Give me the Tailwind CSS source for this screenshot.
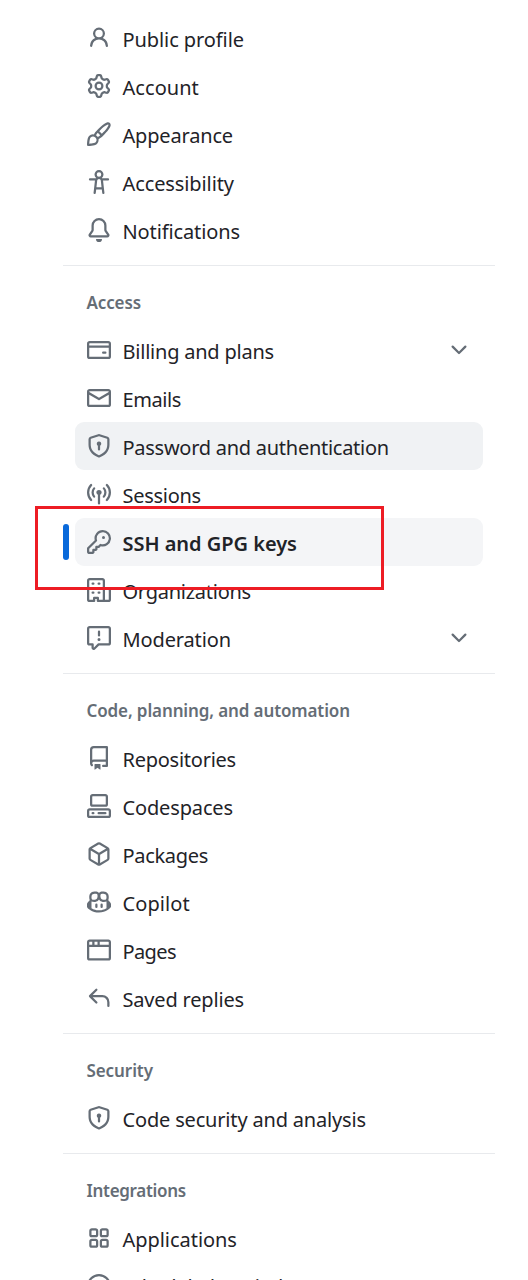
<!DOCTYPE html>
<html lang="en">
<head>
<meta charset="utf-8">
<title>Settings</title>
<script src="https://cdn.jsdelivr.net/npm/@tailwindcss/browser@4"></script>
</head>
<body class="relative h-[1280px] overflow-hidden bg-white font-['Noto_Sans','Open_Sans',sans-serif] text-[#1f2328]">
<nav id="nav" class="ml-[63px] w-[432px] pt-[14px]"></nav>
<div class="pointer-events-none absolute left-[35px] top-[506px] h-[84px] w-[349px] border-3 border-[#ed1c24]"></div>
<script>
const icons = {
person: "M10.561 8.073a6.005 6.005 0 0 1 3.432 5.142.75.75 0 1 1-1.498.07 4.5 4.5 0 0 0-8.99 0 .75.75 0 0 1-1.498-.07 6.004 6.004 0 0 1 3.431-5.142 3.999 3.999 0 1 1 5.123 0ZM10.5 5a2.5 2.5 0 1 0-5 0 2.5 2.5 0 0 0 5 0Z",
gear: "M8 0a8.2 8.2 0 0 1 .701.031C9.444.095 9.99.645 10.16 1.29l.288 1.107c.018.066.079.158.212.224.231.114.454.243.668.386.123.082.233.09.299.071l1.103-.303c.644-.176 1.392.021 1.82.63.27.385.506.792.704 1.218.315.675.111 1.422-.364 1.891l-.814.806c-.049.048-.098.147-.088.294.016.257.016.515 0 .772-.01.147.038.246.088.294l.814.806c.475.469.679 1.216.364 1.891a7.977 7.977 0 0 1-.704 1.217c-.428.61-1.176.807-1.82.63l-1.102-.302c-.067-.019-.177-.011-.3.071a5.909 5.909 0 0 1-.668.386c-.133.066-.194.158-.211.224l-.29 1.106c-.168.646-.715 1.196-1.458 1.26a8.006 8.006 0 0 1-1.402 0c-.743-.064-1.289-.614-1.458-1.26l-.289-1.106c-.018-.066-.079-.158-.212-.224a5.738 5.738 0 0 1-.668-.386c-.123-.082-.233-.09-.299-.071l-1.103.303c-.644.176-1.392-.021-1.82-.63a8.12 8.12 0 0 1-.704-1.218c-.315-.675-.111-1.422.363-1.891l.815-.806c.05-.048.098-.147.088-.294a6.214 6.214 0 0 1 0-.772c.01-.147-.038-.246-.088-.294l-.815-.806C.635 6.045.431 5.298.746 4.623a7.92 7.92 0 0 1 .704-1.217c.428-.61 1.176-.807 1.82-.63l1.102.302c.067.019.177.011.3-.071.214-.143.437-.272.668-.386.133-.066.194-.158.211-.224l.29-1.106C6.009.645 6.556.095 7.299.03 7.53.01 7.764 0 8 0Zm-.571 1.525c-.036.003-.108.036-.137.146l-.289 1.105c-.147.561-.549.967-.998 1.189-.173.086-.34.183-.5.29-.417.278-.97.423-1.529.27l-1.103-.303c-.109-.03-.175.016-.195.045-.22.312-.412.644-.573.99-.014.031-.021.11.059.19l.815.806c.411.406.562.957.53 1.456a4.709 4.709 0 0 0 0 .582c.032.499-.119 1.05-.53 1.456l-.815.806c-.081.08-.073.159-.059.19.162.346.353.677.573.989.02.03.085.076.195.046l1.102-.303c.56-.153 1.113-.008 1.53.27.161.107.328.204.501.29.447.222.85.629.997 1.189l.289 1.105c.029.109.101.143.137.146a6.6 6.6 0 0 0 1.142 0c.036-.003.108-.036.137-.146l.289-1.105c.147-.561.549-.967.998-1.189.173-.086.34-.183.5-.29.417-.278.97-.423 1.529-.27l1.103.303c.109.029.175-.016.195-.045.22-.313.411-.644.573-.99.014-.031.021-.11-.059-.19l-.815-.806c-.411-.406-.562-.957-.53-1.456a4.709 4.709 0 0 0 0-.582c-.032-.499.119-1.05.53-1.456l.815-.806c.081-.08.073-.159.059-.19a6.464 6.464 0 0 0-.573-.989c-.02-.03-.085-.076-.195-.046l-1.102.303c-.56.153-1.113.008-1.53-.27a4.44 4.44 0 0 0-.501-.29c-.447-.222-.85-.629-.997-1.189l-.289-1.105c-.029-.11-.101-.143-.137-.146a6.6 6.6 0 0 0-1.142 0ZM11 8a3 3 0 1 1-6 0 3 3 0 0 1 6 0ZM9.5 8a1.5 1.5 0 1 0-3.001.001A1.5 1.5 0 0 0 9.5 8Z",
brush: "M11.134 1.535c.7-.509 1.416-.942 2.076-1.155.649-.21 1.463-.267 2.069.34.603.601.568 1.411.368 2.07-.202.668-.624 1.39-1.125 2.096-1.011 1.424-2.496 2.987-3.775 4.249-1.098 1.084-2.132 1.839-3.04 2.3a3.744 3.744 0 0 1-1.055 3.217c-.431.431-1.065.691-1.657.861-.614.177-1.294.287-1.914.357A21.151 21.151 0 0 1 .797 16H.743l.007-.75H.749L.742 16a.75.75 0 0 1-.743-.742l.743-.008-.742.007v-.054a21.25 21.25 0 0 1 .13-2.284c.067-.647.187-1.287.358-1.914.17-.591.43-1.226.86-1.657a3.746 3.746 0 0 1 3.227-1.054c.466-.893 1.225-1.907 2.314-2.982 1.271-1.255 2.833-2.75 4.245-3.777ZM1.62 13.089c-.051.464-.086.929-.104 1.395.466-.018.932-.053 1.396-.104a10.511 10.511 0 0 0 1.668-.309c.526-.151.856-.325 1.011-.48a2.25 2.25 0 1 0-3.182-3.182c-.155.155-.329.485-.48 1.01a10.515 10.515 0 0 0-.309 1.67Zm10.396-10.34c-1.224.89-2.605 2.189-3.822 3.384l1.718 1.718c1.21-1.205 2.51-2.597 3.387-3.833.47-.662.78-1.227.912-1.662.134-.444.032-.551.009-.575h-.001V1.78c-.014-.014-.113-.113-.548.027-.432.14-.995.462-1.655.942Zm-4.832 7.266-.001.001a9.859 9.859 0 0 0 1.63-1.142L7.155 7.216a9.7 9.7 0 0 0-1.161 1.607c.482.302.889.71 1.19 1.192Z",
accessibility: "M9.923 5.302c.063.063.122.129.178.198H14A.75.75 0 0 1 14 7h-3.3l.578 5.163.362 2.997a.75.75 0 0 1-1.49.18L9.868 13H6.132l-.282 2.34a.75.75 0 0 1-1.49-.18l.362-2.997L5.3 7H2a.75.75 0 0 1 0-1.5h3.9a2.54 2.54 0 0 1 .176-.198 3 3 0 1 1 3.847 0ZM9.2 7.073h-.001a1.206 1.206 0 0 0-2.398 0L6.305 11.5h3.39ZM9.5 3a1.5 1.5 0 1 0-3.001.001A1.5 1.5 0 0 0 9.5 3Z",
bell: "M8 16a2 2 0 0 0 1.985-1.75c.017-.137-.097-.25-.235-.25h-3.5c-.138 0-.252.113-.235.25A2 2 0 0 0 8 16ZM3 5a5 5 0 0 1 10 0v2.947c0 .05.015.098.042.139l1.703 2.555A1.519 1.519 0 0 1 13.482 13H2.518a1.516 1.516 0 0 1-1.263-2.36l1.703-2.554A.255.255 0 0 0 3 7.947Zm5-3.5A3.5 3.5 0 0 0 4.5 5v2.947c0 .346-.102.683-.294.97l-1.703 2.556a.017.017 0 0 0-.003.01l.001.006c0 .002.002.004.004.006l.006.004.007.001h10.964l.007-.001.006-.004.004-.006.001-.007a.017.017 0 0 0-.003-.01l-1.703-2.554a1.745 1.745 0 0 1-.294-.97V5A3.5 3.5 0 0 0 8 1.5Z",
card: "M10.75 9a.75.75 0 0 0 0 1.5h1.5a.75.75 0 0 0 0-1.5h-1.5ZM0 3.75C0 2.784.784 2 1.75 2h12.5c.966 0 1.75.784 1.75 1.75v8.5A1.75 1.75 0 0 1 14.25 14H1.75A1.75 1.75 0 0 1 0 12.25ZM14.5 6.5h-13v5.75c0 .138.112.25.25.25h12.5a.25.25 0 0 0 .25-.25Zm0-2.75a.25.25 0 0 0-.25-.25H1.75a.25.25 0 0 0-.25.25V5h13Z",
mail: "M1.75 2h12.5c.966 0 1.75.784 1.75 1.75v8.5A1.75 1.75 0 0 1 14.25 14H1.75A1.75 1.75 0 0 1 0 12.25v-8.5C0 2.784.784 2 1.75 2ZM1.5 12.251c0 .138.112.25.25.25h12.5a.25.25 0 0 0 .25-.25V5.809L8.38 9.397a.75.75 0 0 1-.76 0L1.5 5.809v6.442Zm13-8.181v-.32a.25.25 0 0 0-.25-.25H1.75a.25.25 0 0 0-.25.25v.32L8 7.88Z",
shield: "m8.533.133 5.25 1.68A1.75 1.75 0 0 1 15 3.48V7c0 1.566-.32 3.182-1.303 4.682-.983 1.498-2.585 2.813-5.032 3.855a1.697 1.697 0 0 1-1.33 0c-2.447-1.042-4.049-2.357-5.032-3.855C1.32 10.182 1 8.566 1 7V3.48a1.75 1.75 0 0 1 1.217-1.667l5.25-1.68a1.748 1.748 0 0 1 1.066 0Zm-.61 1.429.001.001-5.25 1.68a.251.251 0 0 0-.174.237V7c0 1.36.275 2.666 1.057 3.859.784 1.194 2.121 2.342 4.366 3.298a.196.196 0 0 0 .154 0c2.245-.957 3.582-2.103 4.366-3.297C13.225 9.666 13.5 8.358 13.5 7V3.48a.25.25 0 0 0-.174-.238l-5.25-1.68a.25.25 0 0 0-.153 0ZM9.5 6.5c0 .536-.286 1.032-.75 1.3v2.45a.75.75 0 0 1-1.5 0V7.8A1.5 1.5 0 1 1 9.5 6.5Z",
broadcast: "M8.75 8.582v5.668a.75.75 0 0 1-1.5 0V8.582a1.75 1.75 0 1 1 1.5 0Zm3.983-7.125a.75.75 0 0 1 1.06.026A7.976 7.976 0 0 1 16 7c0 2.139-.84 4.083-2.207 5.517a.75.75 0 1 1-1.086-1.034A6.474 6.474 0 0 0 14.5 7a6.474 6.474 0 0 0-1.793-4.483.75.75 0 0 1 .026-1.06Zm-9.466 0c.3.286.312.76.026 1.06A6.474 6.474 0 0 0 1.5 7a6.47 6.47 0 0 0 1.793 4.483.75.75 0 0 1-1.086 1.034A7.973 7.973 0 0 1 0 7c0-2.139.84-4.083 2.207-5.517a.75.75 0 0 1 1.06-.026Zm8.556 2.321A4.988 4.988 0 0 1 13 7a4.988 4.988 0 0 1-1.177 3.222.75.75 0 1 1-1.146-.967A3.487 3.487 0 0 0 11.5 7c0-.86-.309-1.645-.823-2.255a.75.75 0 0 1 1.146-.967Zm-6.492.958A3.48 3.48 0 0 0 4.5 7a3.48 3.48 0 0 0 .823 2.255.75.75 0 0 1-1.146.967A4.981 4.981 0 0 1 3 7a4.982 4.982 0 0 1 1.188-3.236.75.75 0 1 1 1.143.972Z",
key: "M10.5 0a5.499 5.499 0 1 1-1.288 10.848l-.932.932a.749.749 0 0 1-.53.22H7v.75a.749.749 0 0 1-.22.53l-.5.5a.749.749 0 0 1-.53.22H5v.75a.749.749 0 0 1-.22.53l-.5.5a.749.749 0 0 1-.53.22h-2A1.75 1.75 0 0 1 0 14.25v-2c0-.199.079-.389.22-.53l4.932-4.932A5.5 5.5 0 0 1 10.5 0Zm-4 5.5c-.001.431.069.86.205 1.269a.75.75 0 0 1-.181.768L1.5 12.56v1.69c0 .138.112.25.25.25h1.69l.06-.06v-1.19a.75.75 0 0 1 .75-.75h1.19l.06-.06v-1.19a.75.75 0 0 1 .75-.75h1.19l1.023-1.025a.75.75 0 0 1 .768-.18A4 4 0 1 0 6.5 5.5ZM11 6a1 1 0 1 1 0-2 1 1 0 0 1 0 2Z",
org: "M1.75 16A1.75 1.75 0 0 1 0 14.25V1.75C0 .784.784 0 1.75 0h8.5C11.216 0 12 .784 12 1.75v12.5c0 .085-.006.168-.018.25h2.268a.25.25 0 0 0 .25-.25V8.285a.25.25 0 0 0-.111-.208l-1.055-.703a.749.749 0 1 1 .832-1.248l1.055.703c.487.325.779.871.779 1.456v5.965A1.75 1.75 0 0 1 14.25 16h-3.5a.766.766 0 0 1-.197-.026c-.099.017-.2.026-.303.026h-3a.75.75 0 0 1-.75-.75V14h-1v1.25a.75.75 0 0 1-.75.75Zm-.25-1.75c0 .138.112.25.25.25H4v-1.25a.75.75 0 0 1 .75-.75h2.5a.75.75 0 0 1 .75.75v1.25h2.25a.25.25 0 0 0 .25-.25V1.75a.25.25 0 0 0-.25-.25h-8.5a.25.25 0 0 0-.25.25ZM3.75 6h.5a.75.75 0 0 1 0 1.5h-.5a.75.75 0 0 1 0-1.5ZM3 3.75A.75.75 0 0 1 3.75 3h.5a.75.75 0 0 1 0 1.5h-.5A.75.75 0 0 1 3 3.75Zm4 3A.75.75 0 0 1 7.75 6h.5a.75.75 0 0 1 0 1.5h-.5A.75.75 0 0 1 7 6.75ZM7.75 3h.5a.75.75 0 0 1 0 1.5h-.5a.75.75 0 0 1 0-1.5ZM3 9.75A.75.75 0 0 1 3.75 9h.5a.75.75 0 0 1 0 1.5h-.5A.75.75 0 0 1 3 9.75ZM7.75 9h.5a.75.75 0 0 1 0 1.5h-.5a.75.75 0 0 1 0-1.5Z",
report: "M0 1.75C0 .784.784 0 1.75 0h12.5C15.216 0 16 .784 16 1.75v9.5A1.75 1.75 0 0 1 14.25 13H8.06l-2.573 2.573A1.458 1.458 0 0 1 3 14.543V13H1.75A1.75 1.75 0 0 1 0 11.25Zm1.75-.25a.25.25 0 0 0-.25.25v9.5c0 .138.112.25.25.25h2a.75.75 0 0 1 .75.75v2.19l2.72-2.72a.749.749 0 0 1 .53-.22h6.5a.25.25 0 0 0 .25-.25v-9.5a.25.25 0 0 0-.25-.25Zm7 2.25v2.5a.75.75 0 0 1-1.5 0v-2.5a.75.75 0 0 1 1.5 0ZM9 9a1 1 0 1 1-2 0 1 1 0 0 1 2 0Z",
repo: "M2 2.5A2.5 2.5 0 0 1 4.5 0h8.75a.75.75 0 0 1 .75.75v12.5a.75.75 0 0 1-.75.75h-2.5a.75.75 0 0 1 0-1.5h1.75v-2h-8a1 1 0 0 0-.714 1.7.75.75 0 1 1-1.072 1.05A2.495 2.495 0 0 1 2 11.5Zm10.5-1h-8a1 1 0 0 0-1 1v6.708A2.486 2.486 0 0 1 4.5 9h8ZM5 12.25a.25.25 0 0 1 .25-.25h3.5a.25.25 0 0 1 .25.25v3.25a.25.25 0 0 1-.4.2l-1.45-1.087a.249.249 0 0 0-.3 0L5.4 15.7a.25.25 0 0 1-.4-.2Z",
codespaces: "M0 11.25c0-.966.784-1.75 1.75-1.75h12.5c.966 0 1.75.784 1.75 1.75v3A1.75 1.75 0 0 1 14.25 16H1.75A1.75 1.75 0 0 1 0 14.25Zm2-9.5C2 .784 2.784 0 3.75 0h8.5C13.216 0 14 .784 14 1.75v5a1.75 1.75 0 0 1-1.75 1.75h-8.5A1.75 1.75 0 0 1 2 6.75Zm1.75-.25a.25.25 0 0 0-.25.25v5c0 .138.112.25.25.25h8.5a.25.25 0 0 0 .25-.25v-5a.25.25 0 0 0-.25-.25Zm-2 9.5a.25.25 0 0 0-.25.25v3c0 .138.112.25.25.25h12.5a.25.25 0 0 0 .25-.25v-3a.25.25 0 0 0-.25-.25ZM7 12.75a.75.75 0 0 1 .75-.75h4.5a.75.75 0 0 1 0 1.5h-4.5a.75.75 0 0 1-.75-.75Zm-4 0a.75.75 0 0 1 .75-.75h.5a.75.75 0 0 1 0 1.5h-.5a.75.75 0 0 1-.75-.75Z",
box: "m8.878.392 5.25 3.045c.54.314.872.89.872 1.514v6.098a1.75 1.75 0 0 1-.872 1.514l-5.25 3.045a1.75 1.75 0 0 1-1.756 0l-5.25-3.045A1.75 1.75 0 0 1 1 11.049V4.951c0-.624.332-1.201.872-1.514L7.122.392a1.75 1.75 0 0 1 1.756 0ZM7.875 1.69l-4.63 2.685L8 7.133l4.755-2.758-4.63-2.685a.248.248 0 0 0-.25 0ZM2.5 5.677v5.372c0 .09.047.171.125.216l4.625 2.683V8.432Zm6.25 8.271 4.625-2.683a.25.25 0 0 0 .125-.216V5.677L8.75 8.432Z",
copilot: "M7.998 15.035c-4.562 0-7.873-2.914-7.998-3.749V9.338c.085-.628.677-1.686 1.588-2.065.013-.07.024-.143.036-.218.029-.183.06-.384.126-.612-.201-.508-.254-1.084-.254-1.656 0-.87.128-1.769.693-2.484.579-.733 1.494-1.124 2.724-1.261 1.206-.134 2.262.034 2.944.765.05.053.096.108.139.165.044-.057.094-.112.143-.165.682-.731 1.738-.899 2.944-.765 1.23.137 2.145.528 2.724 1.261.566.715.693 1.614.693 2.484 0 .572-.053 1.148-.254 1.656.066.228.098.429.126.612.012.076.024.148.037.218.924.385 1.522 1.471 1.591 2.095v1.872c0 .766-3.351 3.795-8.002 3.795Zm0-1.485c2.28 0 4.584-1.11 5.002-1.433V7.862l-.023-.116c-.49.21-1.075.291-1.727.291-1.146 0-2.059-.327-2.71-.991A3.222 3.222 0 0 1 8 6.303a3.24 3.24 0 0 1-.544.743c-.65.664-1.563.991-2.71.991-.652 0-1.236-.081-1.727-.291l-.023.116v4.255c.419.323 2.722 1.433 5.002 1.433ZM6.762 2.83c-.193-.206-.637-.413-1.682-.297-1.019.113-1.479.404-1.713.7-.247.312-.369.789-.369 1.554 0 .793.129 1.171.308 1.371.162.181.519.379 1.442.379.853 0 1.339-.235 1.638-.54.315-.322.527-.827.617-1.553.117-.935-.037-1.395-.241-1.614Zm4.155-.297c-1.044-.116-1.488.091-1.681.297-.204.219-.359.679-.242 1.614.091.726.303 1.231.618 1.553.299.305.784.54 1.638.54.922 0 1.28-.198 1.442-.379.179-.2.308-.578.308-1.371 0-.765-.123-1.242-.37-1.554-.233-.296-.693-.587-1.713-.7ZM6.25 9.037a.75.75 0 0 1 .75.75v1.501a.75.75 0 0 1-1.5 0V9.787a.75.75 0 0 1 .75-.75Zm4.25.75v1.501a.75.75 0 0 1-1.5 0V9.787a.75.75 0 0 1 1.5 0Z",
browser: "M0 2.75C0 1.784.784 1 1.75 1h12.5c.966 0 1.75.784 1.75 1.75v10.5A1.75 1.75 0 0 1 14.25 15H1.75A1.75 1.75 0 0 1 0 13.25ZM14.5 6h-13v7.25c0 .138.112.25.25.25h12.5a.25.25 0 0 0 .25-.25Zm-6-3.5v2h6V2.75a.25.25 0 0 0-.25-.25ZM5 2.5v2h2v-2Zm-3.25 0a.25.25 0 0 0-.25.25V4.5h2v-2Z",
reply: "M6.78 1.97a.75.75 0 0 1 0 1.06L3.81 6h6.44A4.75 4.75 0 0 1 15 10.75v2.5a.75.75 0 0 1-1.5 0v-2.5a3.25 3.25 0 0 0-3.25-3.25H3.81l2.97 2.97a.749.749 0 0 1-.326 1.275.749.749 0 0 1-.734-.215L1.47 7.28a.75.75 0 0 1 0-1.06l4.25-4.25a.75.75 0 0 1 1.06 0Z",
apps: "M1.5 3.25c0-.966.784-1.75 1.75-1.75h2.5c.966 0 1.75.784 1.75 1.75v2.5A1.75 1.75 0 0 1 5.75 7.5h-2.5A1.75 1.75 0 0 1 1.5 5.75Zm7 0c0-.966.784-1.75 1.75-1.75h2.5c.966 0 1.75.784 1.75 1.75v2.5a1.75 1.75 0 0 1-1.75 1.75h-2.5A1.75 1.75 0 0 1 8.5 5.75Zm-7 7c0-.966.784-1.75 1.75-1.75h2.5c.966 0 1.75.784 1.75 1.75v2.5a1.75 1.75 0 0 1-1.75 1.75h-2.5a1.75 1.75 0 0 1-1.75-1.75Zm7 0c0-.966.784-1.75 1.75-1.75h2.5c.966 0 1.75.784 1.75 1.75v2.5a1.75 1.75 0 0 1-1.75 1.75h-2.5a1.75 1.75 0 0 1-1.75-1.75ZM3.25 3a.25.25 0 0 0-.25.25v2.5c0 .138.112.25.25.25h2.5A.25.25 0 0 0 6 5.75v-2.5A.25.25 0 0 0 5.75 3Zm7 0a.25.25 0 0 0-.25.25v2.5c0 .138.112.25.25.25h2.5a.25.25 0 0 0 .25-.25v-2.5a.25.25 0 0 0-.25-.25Zm-7 7a.25.25 0 0 0-.25.25v2.5c0 .138.112.25.25.25h2.5a.25.25 0 0 0 .25-.25v-2.5a.25.25 0 0 0-.25-.25Zm7 0a.25.25 0 0 0-.25.25v2.5c0 .138.112.25.25.25h2.5a.25.25 0 0 0 .25-.25v-2.5a.25.25 0 0 0-.25-.25Z",
clock: "M8 0a8 8 0 1 1 0 16A8 8 0 0 1 8 0ZM1.5 8a6.5 6.5 0 1 0 13 0 6.5 6.5 0 0 0-13 0Zm7-3.25v2.992l2.028.812a.75.75 0 0 1-.557 1.392l-2.5-1A.751.751 0 0 1 7 8.25v-3.5a.75.75 0 0 1 1.5 0Z",
chevron: "M12.78 5.22a.749.749 0 0 1 0 1.06l-4.25 4.25a.749.749 0 0 1-1.06 0L3.22 6.28a.749.749 0 1 1 1.06-1.06L8 8.939l3.72-3.719a.749.749 0 0 1 1.06 0Z"
};
// Each item: icon, label, label width in px, state
const groups = [
 {items: [["person","Public profile",121],["gear","Account",76],["brush","Appearance",110],["accessibility","Accessibility",111],["bell","Notifications",117]]},
 {title: ["Access",54], items: [["card","Billing and plans",151,"more"],["mail","Emails",58],["shield","Password and authentication",266,"hover"],["broadcast","Sessions",78],["key","SSH and GPG keys",174,"current"],["org","Organizations",128],["report","Moderation",108,"more"]]},
 {title: ["Code, planning, and automation",263], items: [["repo","Repositories",113],["codespaces","Codespaces",110],["box","Packages",85],["copilot","Copilot",67],["browser","Pages",53],["reply","Saved replies",121]]},
 {title: ["Security",66], items: [["shield","Code security and analysis",243]]},
 {title: ["Integrations",99], items: [["apps","Applications",114],["clock","Scheduled reminders",187,"last"]]}
];
const ctx = document.createElement("canvas").getContext("2d");
// Letter spacing that makes a label fill its width
const track = (text, width, font) => {
  ctx.font = font;
  return ((width + 0.4 - ctx.measureText(text).width) / text.length).toFixed(3);
};
const svg = n => `<svg class="block size-6 shrink-0 fill-[#656d76]" viewBox="0 0 16 16"><path d="${icons[n]}"/></svg>`;
const row = ([icon, label, w, state]) => `
<li class="relative mx-3 flex h-12 items-center gap-[11.5px] rounded-[9px] px-3 ${state === "hover" ? "bg-[#f0f2f4]" : state === "current" ? "bg-[#f4f5f7]" : ""}">
${state === "current" ? '<span class="absolute -left-3 top-1.5 h-9 w-1.5 rounded-full bg-[#0969da]"></span>' : ""}
${svg(icon)}<span style="letter-spacing:${track(label, w, (state === "current" ? "600" : "400") + " 20px 'Noto Sans'")}px" class="${state === "last" ? "mt-px" : "mt-[3px]"} whitespace-nowrap text-[20px] leading-[30px] ${state === "current" ? "font-semibold" : ""}">${label}</span>
${state === "more" ? '<span class="ml-auto">' + svg("chevron") + '</span>' : ""}
</li>`;
document.getElementById("nav").innerHTML = groups.map(g => `
<section>${g.title ? `<div class="mt-[11px] h-px bg-[#e8eaed]"></div>
<h3 class="flex h-[60px] items-center px-[23.5px] pt-[12px] text-[17px] font-semibold leading-[27px] text-[#656d76]"><span style="letter-spacing:${track(g.title[0], g.title[1], "600 17px 'Noto Sans'")}px" class="whitespace-nowrap">${g.title[0]}</span></h3>` : ""}
<ul>${g.items.map(row).join("")}</ul></section>`).join("");
</script>
</body>
</html>
